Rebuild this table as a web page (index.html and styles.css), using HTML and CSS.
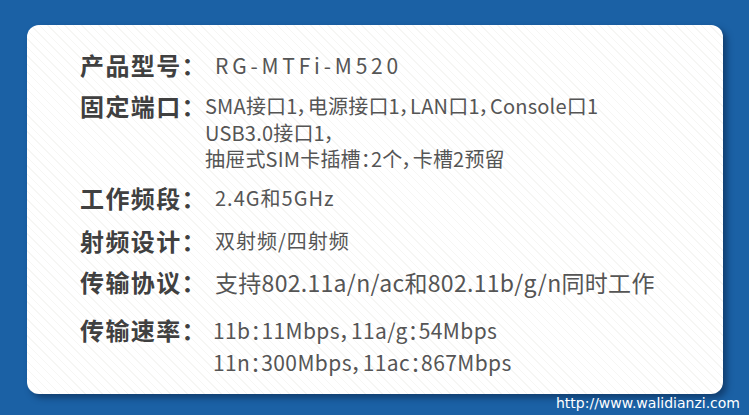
FILE: index.html
```html
<!DOCTYPE html>
<html lang="zh-CN">
<head>
    <meta charset="UTF-8">
    <meta name="viewport" content="width=device-width, initial-scale=1.0">
    <title>RG-MTFi-M520 参数</title>
    <link rel="stylesheet" href="styles.css">
</head>
<body>

    <div class="page">
        <div class="card">
            <div class="row">
                <div class="label">产品型号：</div>
                <div class="value model">RG-MTFi-M520</div>
            </div>
            <div class="row ports">
                <div class="label">固定端口：</div>
                <div class="value">
                    SMA接口1，电源接口1，LAN口1，Console口1<br>
                    USB3.0接口1，<br>
                    抽屉式SIM卡插槽：2个，卡槽2预留
                </div>
            </div>
            <div class="row band">
                <div class="label">工作频段：</div>
                <div class="value">2.4G和5GHz</div>
            </div>
            <div class="row">
                <div class="label">射频设计：</div>
                <div class="value">双射频/四射频</div>
            </div>
            <div class="row protocol">
                <div class="label">传输协议：</div>
                <div class="value">支持802.11a/n/ac和802.11b/g/n同时工作</div>
            </div>
            <div class="row rate">
                <div class="label">传输速率：</div>
                <div class="value">
                    11b：11Mbps，11a/g：54Mbps<br>
                    11n：300Mbps，11ac：867Mbps
                </div>
            </div>
        </div>
        <div class="footer">http://www.walidianzi.com</div>
    </div>

</body>
</html>
```

FILE: styles.css
```css
body {
    margin: 0;
    height: 415px;
    overflow: hidden;
    background: #1b61a5;
    font-family: "Noto Sans CJK SC", "Noto Sans", sans-serif;
}

.page {
    padding: 25px 26px 0 27px;
}

.card {
    height: 342px;
    padding-top: 27px;
    padding-left: 53px;
    border-radius: 12px;
    background-color: #fff;
    background-image: repeating-linear-gradient(45deg, #fff 0, #fff 5px, #f6f6f4 5px, #f6f6f4 6px);
    box-shadow: 4px 4px 6px rgba(10, 35, 70, 0.55);
}

.row {
    display: grid;
    grid-template-columns: 135px 1fr;
    margin-bottom: 15px;
}

.label {
    font-size: 24px;
    font-weight: 700;
    line-height: 26px;
    color: #404040;
    letter-spacing: 1.4px;
}

.value {
    font-size: 20px;
    line-height: 26px;
    color: #555;
    letter-spacing: 1px;
    font-feature-settings: "palt";
}

.model {
    font-size: 21px;
    letter-spacing: 3.8px;
}

.ports {
    margin-top: 1px;
    margin-bottom: 12px;
}

.ports .value {
    margin-left: -10px;
    line-height: 26.5px;
    letter-spacing: 0.2px;
}

.band {
    margin-bottom: 17px;
}

.protocol {
    margin-top: 5px;
    margin-bottom: 22px;
}

.protocol .value {
    font-size: 23px;
    letter-spacing: 0.3px;
}

.rate .value {
    margin-left: -2px;
    margin-top: -3px;
    font-size: 21px;
    line-height: 32px;
    letter-spacing: 0.4px;
}

.footer {
    margin-right: -17px;
    padding-top: 1px;
    text-align: right;
    font-family: "DejaVu Sans", sans-serif;
    font-size: 14px;
    color: #fff;
}
```
